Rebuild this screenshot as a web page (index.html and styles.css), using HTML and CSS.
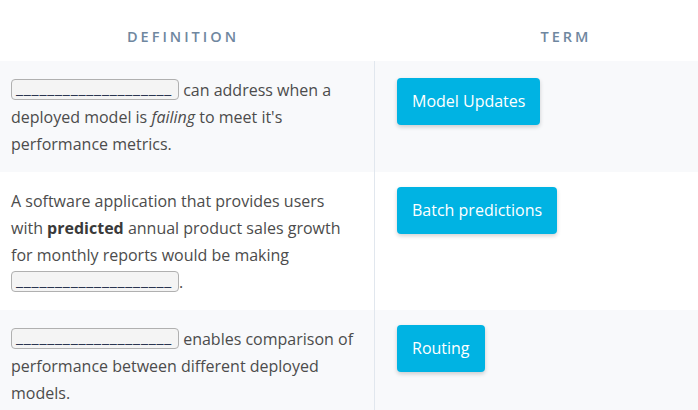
FILE: index.html
```html
<!DOCTYPE html>
<html>
<head>
<meta charset="utf-8">
<link rel="stylesheet" href="styles.css">
</head>
<body>
<div class="table">
  <div class="head head-def">DEFINITION</div>
  <div class="head head-term">TERM</div>

  <div class="cell def shade"><span class="blank">____________________</span> can address when a deployed model is <em>failing</em> to meet it's performance metrics.</div>
  <div class="cell term shade first"><span class="btn">Model Updates</span></div>

  <div class="cell def">A software application that provides users with <strong>predicted</strong> annual product sales growth for monthly reports would be making <span class="blank">____________________</span>.</div>
  <div class="cell term"><span class="btn">Batch predictions</span></div>

  <div class="cell def shade"><span class="blank">____________________</span> enables comparison of performance between different deployed models.</div>
  <div class="cell term shade"><span class="btn">Routing</span></div>
</div>
</body>
</html>
```
FILE: styles.css
```css
html, body {
  margin: 0;
  padding: 0;
  background: #ffffff;
}
body {
  font-family: "Open Sans", sans-serif;
  color: #4c4c4c;
  font-size: 16px;
}
.table {
  display: grid;
  grid-template-columns: 374px 1fr;
}
.head {
  height: 61px;
  display: flex;
  align-items: center;
  justify-content: center;
  font-size: 14.5px;
  font-weight: 600;
  letter-spacing: 3px;
  color: #6f879f;
  padding-top: 12px;
  box-sizing: border-box;
}
.head-def {
  padding-right: 8px;
}
.head-term {
  padding-left: 60px;
}
.cell {
  box-sizing: border-box;
}
.shade {
  background: #f8f9fb;
}
.def {
  padding: 16px 16px 14px 11px;
  line-height: 27px;
}
.term {
  border-left: 1px solid #e1e7ee;
  padding: 15px 22px 16px;
}
.term.first {
  padding-top: 17px;
}
.def em {
  font-style: italic;
}
.def strong {
  font-weight: 700;
  color: #3a3a3a;
}
.blank {
  display: inline-block;
  box-sizing: border-box;
  width: 168px;
  height: 21px;
  line-height: 17px;
  border: 1px solid #b0b0b0;
  border-radius: 4px;
  background: #f4f4f4;
  color: #2a3550;
  font-size: 16px;
  padding-left: 4px;
  overflow: hidden;
  white-space: nowrap;
  vertical-align: -4px;
  letter-spacing: 0.8px;
}
.btn {
  display: inline-block;
  background: #00b3e3;
  color: #ffffff;
  font-size: 16px;
  line-height: 47px;
  height: 47px;
  padding: 0 15px;
  border-radius: 4px;
  box-shadow: 0 2px 4px rgba(0, 0, 0, 0.18);
}
```
